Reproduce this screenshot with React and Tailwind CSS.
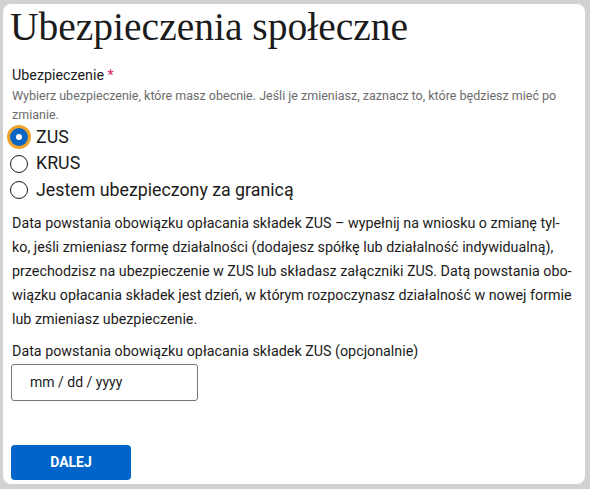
export default function App() {
  const options = [
    { label: 'ZUS', checked: true },
    { label: 'KRUS', checked: false },
    { label: 'Jestem ubezpieczony za granicą', checked: false },
  ];

  return (
    <div className="w-[590px] h-[489px] bg-[#d2d2d2] pl-[3px] pt-[4px] pr-[5px] pb-[5px]">
      <div className="h-full bg-white rounded-lg pl-[7px] pr-[10px] font-['Roboto',sans-serif] text-[#1b1b1b]">
        <h1 className="font-['Liberation_Serif',serif] text-[39.5px] leading-[46px] text-[#1b1b1b]">
          Ubezpieczenia społeczne
        </h1>

        {/* Radio group */}
        <div className="mt-[15px] pl-[2px]">
          <div className="text-[14.3px] leading-[20px]">
            Ubezpieczenie <span className="text-[#e0245e]">*</span>
          </div>
          <div className="text-[12.5px] leading-[19px] text-[#6b6b6b] mt-[1px]">
            Wybierz ubezpieczenie, które masz obecnie. Jeśli je zmieniasz, zaznacz to, które będziesz mieć po zmianie.
          </div>
          <div className="flex flex-col -ml-[2px]">
            {options.map((o) => (
              <label key={o.label} className="flex items-center gap-[8px] h-[26.5px] text-[17.8px]">
                {o.checked ? (
                  <span className="w-[18px] h-[18px] rounded-full bg-[#0a66c2] ring-[3px] ring-[#f0a32c] flex items-center justify-center">
                    <span className="w-[6px] h-[6px] rounded-full bg-white" />
                  </span>
                ) : (
                  <span className="w-[18px] h-[18px] rounded-full border-[1.5px] border-[#1b1b1b] bg-white" />
                )}
                <span>{o.label}</span>
              </label>
            ))}
          </div>
        </div>

        <p className="mt-[7px] pl-[2px] text-[14.3px] leading-[24px] whitespace-nowrap">
          Data powstania obowiązku opłacania składek ZUS – wypełnij na wniosku o zmianę tyl-<br />
          ko, jeśli zmieniasz formę działalności (dodajesz spółkę lub działalność indywidualną),<br />
          przechodzisz na ubezpieczenie w ZUS lub składasz załączniki ZUS. Datą powstania obo-<br />
          wiązku opłacania składek jest dzień, w którym rozpoczynasz działalność w nowej formie<br />
          lub zmieniasz ubezpieczenie.
        </p>

        <div className="mt-[10px] pl-[1px]">
          <div className="text-[14.3px] leading-[20px] pl-[1px]">
            Data powstania obowiązku opłacania składek ZUS (opcjonalnie)
          </div>
          <div className="mt-[3px] w-[187px] h-[37px] border border-[#767676] rounded-[3px] flex items-center pl-[18px] text-[14px]">
            mm / dd / yyyy
          </div>
        </div>

        <button className="mt-[44px] ml-[1px] w-[120px] h-[35px] bg-[#0065c8] rounded-[4px] text-white text-[14px] font-bold">
          DALEJ
        </button>
      </div>
    </div>
  );
}
